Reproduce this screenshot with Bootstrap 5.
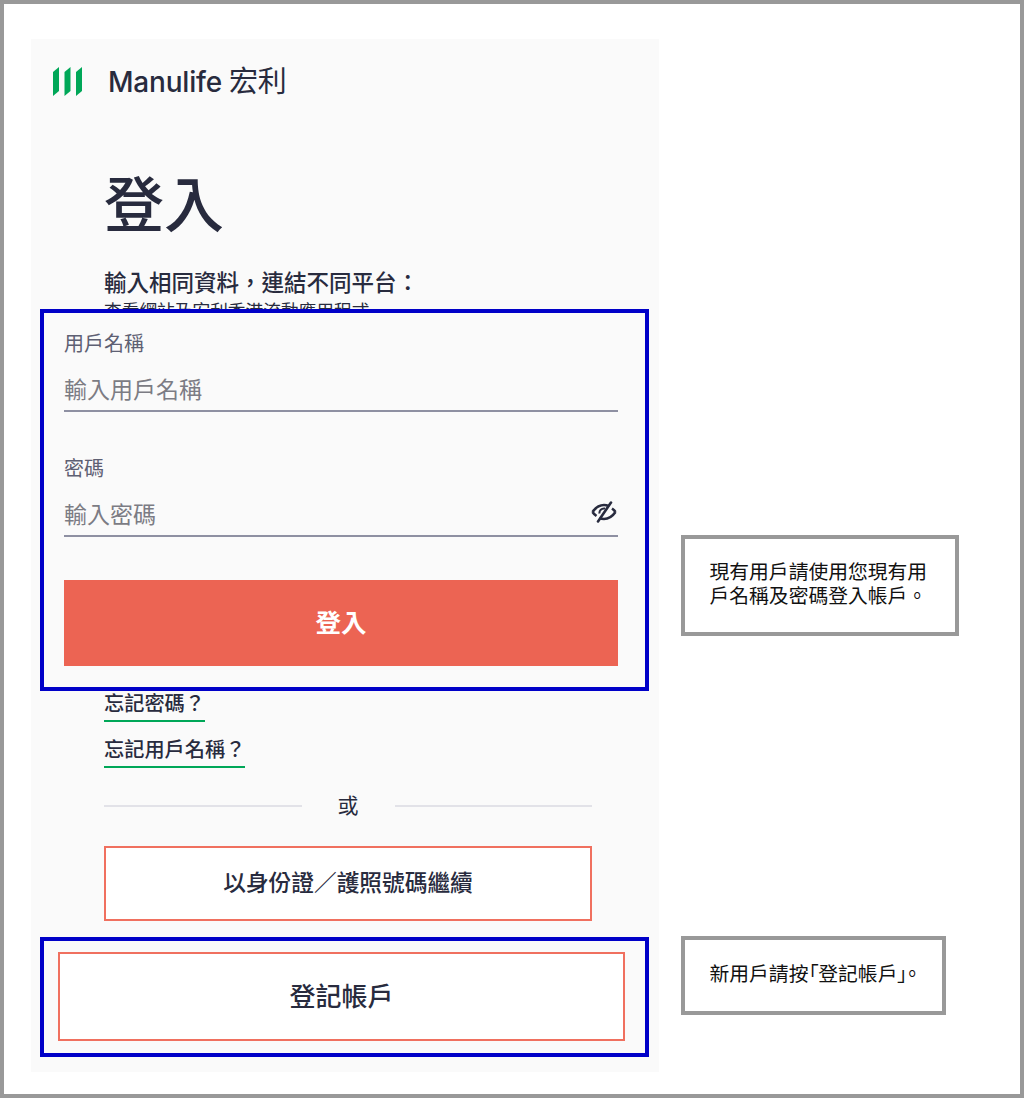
<!DOCTYPE html>
<html lang="zh-Hant">
<head>
<meta charset="utf-8">
<title>登入</title>
<link href="https://cdn.jsdelivr.net/npm/bootstrap@5.3.0/dist/css/bootstrap.min.css" rel="stylesheet">
<style>
html,body{height:100%;}
body{margin:0;background:#fff;font-family:"Inter","Noto Sans CJK TC",sans-serif;color:#282b3e;}
.frame{width:1024px;height:1098px;border:4px solid #999;background:#fff;overflow:hidden;}
.panel{position:relative;width:628px;height:1033px;margin:35px 0 0 27px;background:#fafafa;flex:none;}
.brand{height:31px;margin:27px 0 0 22px;gap:25px;}
.brand-name{font-size:28px;font-weight:500;line-height:31px;color:#282b3e;letter-spacing:-.2px;}
.brand-name span{margin-left:-1px;font-weight:400;font-size:29px;}
.intro{margin-left:73px;width:488px;}
.page-title{font-size:60px;font-weight:500;line-height:72px;margin:72px 0 0;}
.lede{font-size:22.500px;font-weight:500;line-height:30px;margin:27px 0 0;white-space:nowrap;}
.subline{font-size:17.7px;line-height:24px;margin:2px 0 0;white-space:nowrap;}
.links{margin-top:365px;gap:13px;}
.fg-link{font-size:20.200px;font-weight:500;line-height:30px;color:#282b3e;text-decoration:none;border-bottom:2px solid #00a758;padding-bottom:1px;align-self:flex-start;}
.or-row{margin-top:23px;gap:36px;font-size:21px;font-weight:400;line-height:30px;}
.or-line{flex:1;height:2px;background:#e2e2e8;}
.alt-btn{display:block;width:100%;height:75px;margin-top:25px;border:2px solid #f0705f;border-radius:0;background:#fff;color:#282b3e;font-size:22.700px;font-weight:500;}
.overlay{position:absolute;left:9px;width:609px;border:4px solid #0000c8;background:#fafafa;}
.overlay-form{top:270px;height:382px;padding:16px 27px 0 20px;}
.overlay-reg{top:898px;height:120px;padding:11px 20px 0 14px;}
.fld-label{display:block;font-size:20px;line-height:30px;margin:0;color:#5e6073;}
.fld-wrap{position:relative;margin-top:7px;margin-bottom:42px;}
.fld-input{height:46px;padding:4px 0 0;border:0;border-bottom:2px solid #8e90a2;border-radius:0;background:transparent;font-size:23px;color:#282b3e;box-shadow:none;}
.fld-input::placeholder{color:#7c7c84;}
.fld-input:focus{background:transparent;box-shadow:none;border-color:#8e90a2;}
.eye{position:absolute;right:1px;top:9px;width:26px;height:24px;}
.signin{display:block;width:100%;height:86px;margin-top:43px;border:0;border-radius:0;background:#ec6453;color:#fff;font-size:25.5px;font-weight:700;}
.signin:hover,.signin:active{background:#ec6453;color:#fff;}
.reg-btn{display:block;width:100%;height:89px;border:2px solid #f0705f;border-radius:0;background:#fff;color:#282b3e;font-size:26px;font-weight:500;}
.notes{margin-left:22px;flex:none;}
.note{border:4px solid #999;background:#fff;color:#111;font-family:"Noto Sans CJK JP",sans-serif;font-size:19.8px;line-height:24px;padding:0 24.5px 5px;display:flex;align-items:center;}
.note-a{width:278px;height:101px;margin-top:531px;}
.note-b{width:265px;height:79px;margin-top:300px;font-feature-settings:"palt";white-space:nowrap;}
</style>
</head>
<body>
<div class="frame d-flex">
  <main class="panel">
    <div class="brand d-flex align-items-center">
      <svg width="30" height="31" viewBox="0 0 30 31" aria-hidden="true"><g fill="#00a758"><polygon points="0,6 6,1 6,25 0,30"/><polygon points="11.500,6 17.500,1 17.500,25 11.500,30"/><polygon points="23,6 29,1 29,25 23,30"/></g></svg>
      <div class="brand-name">Manulife<span> 宏利</span></div>
    </div>
    <div class="intro">
      <h1 class="page-title">登入</h1>
      <p class="lede">輸入相同資料&#xFF0C;連結不同平台&#xFF1A;</p>
      <p class="subline">查看網站及宏利香港流動應用程式</p>
      <div class="links d-flex flex-column">
        <a class="fg-link" href="#">忘記密碼&#xFF1F;</a>
        <a class="fg-link" href="#">忘記用戶名稱&#xFF1F;</a>
      </div>
      <div class="or-row d-flex align-items-center"><span class="or-line"></span><span>或</span><span class="or-line"></span></div>
      <button type="button" class="btn alt-btn">以身份證&#xFF0F;護照號碼繼續</button>
    </div>
    <form class="overlay overlay-form">
      <label class="fld-label" for="u">用戶名稱</label>
      <div class="fld-wrap"><input id="u" class="form-control fld-input" placeholder="輸入用戶名稱"></div>
      <label class="fld-label" for="p">密碼</label>
      <div class="fld-wrap mb-0"><input id="p" class="form-control fld-input" placeholder="輸入密碼">
        <svg class="eye" viewBox="0 0 26 24" fill="none" stroke="#282b3e" stroke-width="2.600" aria-hidden="true"><path d="M1.500 12C5 7 9 5 13 5c1.500 0 3 .3 4.500 1M24.500 12C21 17 17 19 13 19c-1.500 0-3-.3-4.500-1M1.500 12c1 1.500 2.500 3 4 4M24.500 12c-1-1.500-2-2.500-3.500-3.500"/><path d="M7 21.500 20 2.500" stroke-linecap="round"/><path d="M8.500 13.500c-.5-3 2-5.500 5.500-5" stroke-width="2"/></svg>
      </div>
      <button type="button" class="btn signin">登入</button>
    </form>
    <div class="overlay overlay-reg"><button type="button" class="btn reg-btn">登記帳戶</button></div>
  </main>
  <aside class="notes">
    <div class="note note-a"><div>現有用戶請使用您現有用戶名稱及密碼登入帳戶&#x3002;</div></div>
    <div class="note note-b"><div>新用戶請按&#x300C;登記帳戶&#x300D;&#x3002;</div></div>
  </aside>
</div>
<script src="https://cdn.jsdelivr.net/npm/bootstrap@5.3.0/dist/js/bootstrap.bundle.min.js"></script>
</body>
</html>
